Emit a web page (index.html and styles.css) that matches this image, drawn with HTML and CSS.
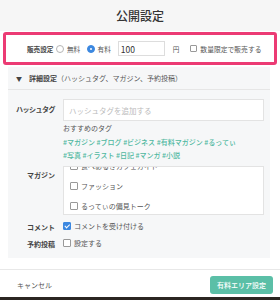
FILE: index.html
```html
<!DOCTYPE html>
<html>
<head>
<meta charset="utf-8">
<link rel="stylesheet" href="styles.css">
</head>
<body>
<div class="modal">
  <div class="head">公開設定</div>
  <div class="sale">
    <span class="slabel">販売設定</span>
    <span class="ropt"><span class="radio"></span>無料</span>
    <span class="ropt"><span class="radio on"></span>有料</span>
    <span class="price">100</span>
    <span class="yen">円</span>
    <span class="opt"><span class="cb"></span>数量限定で販売する</span>
  </div>
  <div class="detail">
    <div class="dhead"><span class="tri">▼</span><b>詳細設定</b>（ハッシュタグ、マガジン、予約投稿）</div>
    <div class="row">
      <div class="rl tight">ハッシュタグ</div>
      <div class="rc">
        <div class="tagin">ハッシュタグを追加する</div>
        <div class="rec">おすすめのタグ</div>
        <div class="tags">#マガジン #ブログ #ビジネス #有料マガジン #るってぃ<br>#写真 #イラスト #日記 #マンガ #小説</div>
      </div>
    </div>
    <div class="row">
      <div class="rl">マガジン</div>
      <div class="rc">
        <div class="mag">
          <div class="mlist">
            <div class="mitem"><span class="cb"></span>食べあるきカフェガイド</div>
            <div class="mitem"><span class="cb"></span>ファッション</div>
            <div class="mitem"><span class="cb"></span>るってぃの偏見トーク</div>
          </div>
        </div>
      </div>
    </div>
    <div class="row crow">
      <div class="rl">コメント</div>
      <div class="rc"><span class="opt"><span class="cb on"></span>コメントを受け付ける</span></div>
    </div>
    <div class="row crow">
      <div class="rl">予約投稿</div>
      <div class="rc"><span class="opt"><span class="cb"></span>設定する</span></div>
    </div>
  </div>
  <div class="foot">
    <span class="cancel">キャンセル</span>
    <span class="btn">有料エリア設定</span>
  </div>
</div>
</body>
</html>
```
FILE: styles.css
```css
html, body {
  margin: 0;
  padding: 0;
}
body {
  background: #2b2622;
  font-family: "Noto Sans CJK JP", "Noto Sans", sans-serif;
  color: #555;
  font-size: 7px;
  white-space: nowrap;
}
.modal {
  width: 280px;
  height: 297px;
  background: #fff;
  display: flex;
  flex-direction: column;
}
.head {
  height: 31px;
  background: #f6f6f6;
  display: flex;
  align-items: center;
  justify-content: center;
  font-size: 12px;
  font-weight: 500;
  color: #333;
}
.sale {
  margin: 1px 3px 0;
  height: 33px;
  box-sizing: border-box;
  border: 3px solid #ec3b74;
  border-radius: 3px;
  display: flex;
  align-items: center;
  padding-left: 21px;
  font-size: 6.6px;
}
.slabel {
  font-weight: bold;
  color: #444;
  margin-right: 3px;
}
.ropt {
  display: inline-flex;
  align-items: center;
  margin-right: 7px;
}
.opt {
  display: inline-flex;
  align-items: center;
}
.opt.sp {
  font-size: 6.8px;
}
.radio {
  width: 6px;
  height: 6px;
  border: 1px solid #b5b5b5;
  border-radius: 50%;
  margin-right: 2.5px;
  background: #fff;
  position: relative;
}
.radio.on {
  background: #3c88e0;
  border-color: #3c88e0;
}
.radio.on::after {
  content: "";
  position: absolute;
  left: 2px;
  top: 2px;
  width: 2px;
  height: 2px;
  border-radius: 50%;
  background: #fff;
}
.price {
  width: 47px;
  height: 15px;
  box-sizing: border-box;
  border: 1px solid #ddd;
  padding-left: 2px;
  font-size: 8.5px;
  color: #333;
  display: flex;
  align-items: center;
  margin-right: 8px;
}
.yen {
  margin-right: 11px;
}
.sale .opt {
  font-size: 6.8px;
}
.cb {
  width: 5px;
  height: 5px;
  border: 1px solid #999;
  border-radius: 1px;
  margin-right: 3px;
  background: #fff;
  display: inline-block;
  position: relative;
}
.mitem .cb, .crow .cb {
  width: 6px;
  height: 6px;
}
.cb.on {
  background: #3c88e0;
  border-color: #3c88e0;
}
.cb.on::after {
  content: "";
  position: absolute;
  left: 1.5px;
  top: 0;
  width: 1.5px;
  height: 3.5px;
  border: solid #fff;
  border-width: 0 1px 1px 0;
  transform: rotate(45deg);
}
.detail {
  margin: 2px 10px 0 8px;
  background: #f6f7f8;
  padding-bottom: 6px;
}
.dhead {
  height: 22px;
  border-bottom: 1px solid #e6e6e6;
  display: flex;
  align-items: center;
  padding-left: 8px;
  color: #555;
}
.dhead b {
  color: #444;
}
.tri {
  font-size: 6px;
  margin-right: 7px;
  color: #444;
}
.row {
  display: flex;
  padding: 0 6px 0 8px;
}
.rl {
  width: 39px;
  margin-right: 8px;
  text-align: right;
  font-weight: bold;
  color: #444;
  flex: none;
}
.rl.tight {
  letter-spacing: -0.5px;
}
.rc {
  flex: 1;
}
.row:nth-child(2) {
  margin-top: 9px;
}
.row:nth-child(2) .rl {
  padding-top: 5px;
}
.tagin {
  height: 20px;
  border: 1px solid #e3e3e3;
  background: #fff;
  color: #bbb;
  display: flex;
  align-items: center;
  padding-left: 5px;
  font-size: 7.5px;
}
.rec {
  margin-top: 1px;
  line-height: 12px;
  color: #555;
}
.tags {
  color: #4fb8a0;
  font-weight: 500;
  line-height: 12.5px;
  margin-top: 2px;
}
.row:nth-child(3) {
  margin-top: 5px;
}
.row:nth-child(3) .rl {
  padding-top: 4px;
}
.mag {
  height: 47px;
  border: 1px solid #e3e3e3;
  background: #fff;
  overflow: hidden;
}
.mlist {
  margin-top: -11px;
}
.mitem {
  height: 20px;
  display: flex;
  align-items: center;
  padding-left: 6px;
}
.crow {
  height: 17px;
  align-items: center;
}
.row:nth-child(4) {
  margin-top: 3px;
}
.foot {
  margin-top: auto;
  height: 28px;
  box-sizing: border-box;
  border-top: 1px solid #e8e8e8;
  display: flex;
  align-items: center;
  justify-content: space-between;
  padding: 2px 7px 0 17px;
}
.cancel {
  color: #555;
}
.btn {
  width: 63px;
  height: 18px;
  background: #5bbfa7;
  border-radius: 3px;
  color: #fff;
  display: flex;
  align-items: center;
  justify-content: center;
  font-weight: 500;
}
```
